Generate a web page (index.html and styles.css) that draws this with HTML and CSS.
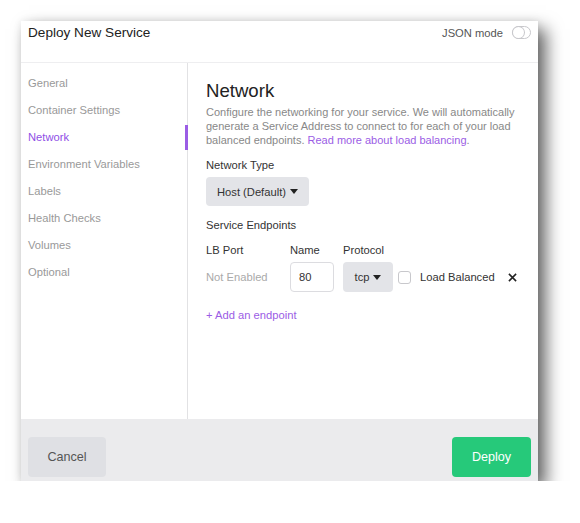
FILE: index.html
```html
<!DOCTYPE html>
<html>
<head>
<meta charset="utf-8">
<link rel="stylesheet" href="styles.css">
</head>
<body>
<div class="modal">
  <div class="header">
    <div class="title">Deploy New Service</div>
    <div class="json">JSON mode <span class="toggle"></span></div>
  </div>
  <div class="main">
    <div class="sidebar">
      <div class="nav">General</div>
      <div class="nav">Container Settings</div>
      <div class="nav active">Network</div>
      <div class="nav">Environment Variables</div>
      <div class="nav">Labels</div>
      <div class="nav">Health Checks</div>
      <div class="nav">Volumes</div>
      <div class="nav">Optional</div>
    </div>
    <div class="content">
      <h1 class="heading">Network</h1>
      <p class="desc">Configure the networking for your service. We will automatically generate a Service Address to connect to for each of your load balanced endpoints. <span class="link">Read more about load balancing</span>.</p>
      <div class="label">Network Type</div>
      <div class="select big">Host (Default) <span class="caret"></span></div>
      <div class="label endpoints">Service Endpoints</div>
      <div class="row heads">
        <div class="c1">LB Port</div>
        <div class="c2">Name</div>
        <div class="c3">Protocol</div>
      </div>
      <div class="row fields">
        <div class="c1 muted">Not Enabled</div>
        <div class="c2"><div class="input">80</div></div>
        <div class="c3"><div class="select small">tcp <span class="caret"></span></div></div>
        <div class="check"></div>
        <div class="lb">Load Balanced</div>
        <svg class="close" width="10" height="10" viewBox="0 0 10 10"><path d="M1 1L9 9M9 1L1 9" stroke="#222" stroke-width="1.7"/></svg>
      </div>
      <div class="add link">+ Add an endpoint</div>
    </div>
  </div>
  <div class="footer">
    <div class="btn cancel">Cancel</div>
    <div class="btn deploy">Deploy</div>
  </div>
</div>
</body>
</html>
```
FILE: styles.css
```css
html, body { margin: 0; padding: 0; background: #fff; }
body { font-family: "Liberation Sans", Arial, sans-serif; }
.modal {
  margin: 21px 0 0 21px;
  width: 517px;
  height: 460px;
  background: #fff;
  display: flex;
  flex-direction: column;
  box-shadow: 8px 8px 16px rgba(0,0,0,0.6), 0 0 8px rgba(0,0,0,0.08);
}
.header {
  height: 41px;
  border-bottom: 1px solid #eeeef0;
  display: flex;
  justify-content: space-between;
  align-items: flex-start;
  padding: 0 7px;
}
.title { font-size: 13.6px; color: #222; margin-top: 4px; }
.json { font-size: 11.2px; color: #555; display: flex; align-items: center; margin-top: 5px; }
.toggle {
  display: inline-block; width: 17px; height: 11px; border: 1px solid #c8c8cc;
  border-radius: 7px; margin-left: 9px; position: relative; background: #fff;
}
.toggle::after {
  content: ""; position: absolute; left: 0; top: 0; width: 11px; height: 11px;
  border-radius: 50%; box-shadow: 0 0 0 1px #c8c8cc; background: #fff;
}
.main { display: flex; height: 356px; }
.sidebar {
  width: 166px; border-right: 1px solid #e2e2e4; padding-top: 13px;
}
.nav {
  font-size: 11.2px; color: #999; height: 27px; line-height: 14px; padding-left: 7px;
  position: relative; white-space: nowrap;
}
.nav.active { color: #8f4fe6; }
.nav.active::after {
  content: ""; position: absolute; right: -1px; top: -5px; width: 3px; height: 25px; background: #9b5de5;
}
.content { flex: 1; padding: 0 10px 0 18px; }
.heading { font-weight: normal; font-size: 18.6px; color: #222; margin: 17px 0 0 0; line-height: 22px; }
.desc { font-size: 11px; color: #888; line-height: 14px; margin: 3px 0 0 0; }
.link { color: #9b5de5; }
.label { font-size: 11.2px; color: #333; margin-top: 11px; line-height: 14px; }
.select {
  background: #e3e4e8; border-radius: 4px; font-size: 11.2px; color: #333;
  display: flex; align-items: center; justify-content: center;
}
.select.big { width: 103px; height: 29px; margin-top: 5px; }
.select.small { width: 50px; height: 30px; }
.caret {
  display: inline-block; width: 0; height: 0; margin-left: 4px;
  border-left: 4px solid transparent; border-right: 4px solid transparent; border-top: 5px solid #222;
}
.label.endpoints { margin-top: 12px; }
.row { display: flex; align-items: center; font-size: 11.2px; color: #333; white-space: nowrap; }
.heads { margin-top: 11px; line-height: 14px; }
.fields { margin-top: 5px; height: 30px; }
.c1 { width: 84px; flex-shrink: 0; }
.c2 { width: 53px; flex-shrink: 0; }
.c3 { width: 55px; flex-shrink: 0; }
.muted { color: #aaa; }
.input {
  width: 42px; height: 28px; border: 1px solid #dcdce0; border-radius: 4px;
  display: flex; align-items: center; text-indent: 8px; box-sizing: content-box;
}
.check { width: 11px; height: 11px; border: 1px solid #c8c8cc; border-radius: 3px; flex-shrink: 0; }
.lb { margin-left: 9px; flex-shrink: 0; }
.close { margin-left: 13px; flex-shrink: 0; width: 9px; height: 9px; }
.add { font-size: 11.2px; margin-top: 17px; }
.footer {
  flex: 1; background: #ebebed; display: flex; justify-content: space-between;
  align-items: flex-start; padding: 18px 7px 0 7px;
}
.btn {
  height: 40px; border-radius: 4px; font-size: 12.6px; display: flex; align-items: center; justify-content: center;
}
.cancel { width: 78px; background: #dfe0e4; color: #555; }
.deploy { width: 79px; background: #26c97a; color: #fff; }
```
